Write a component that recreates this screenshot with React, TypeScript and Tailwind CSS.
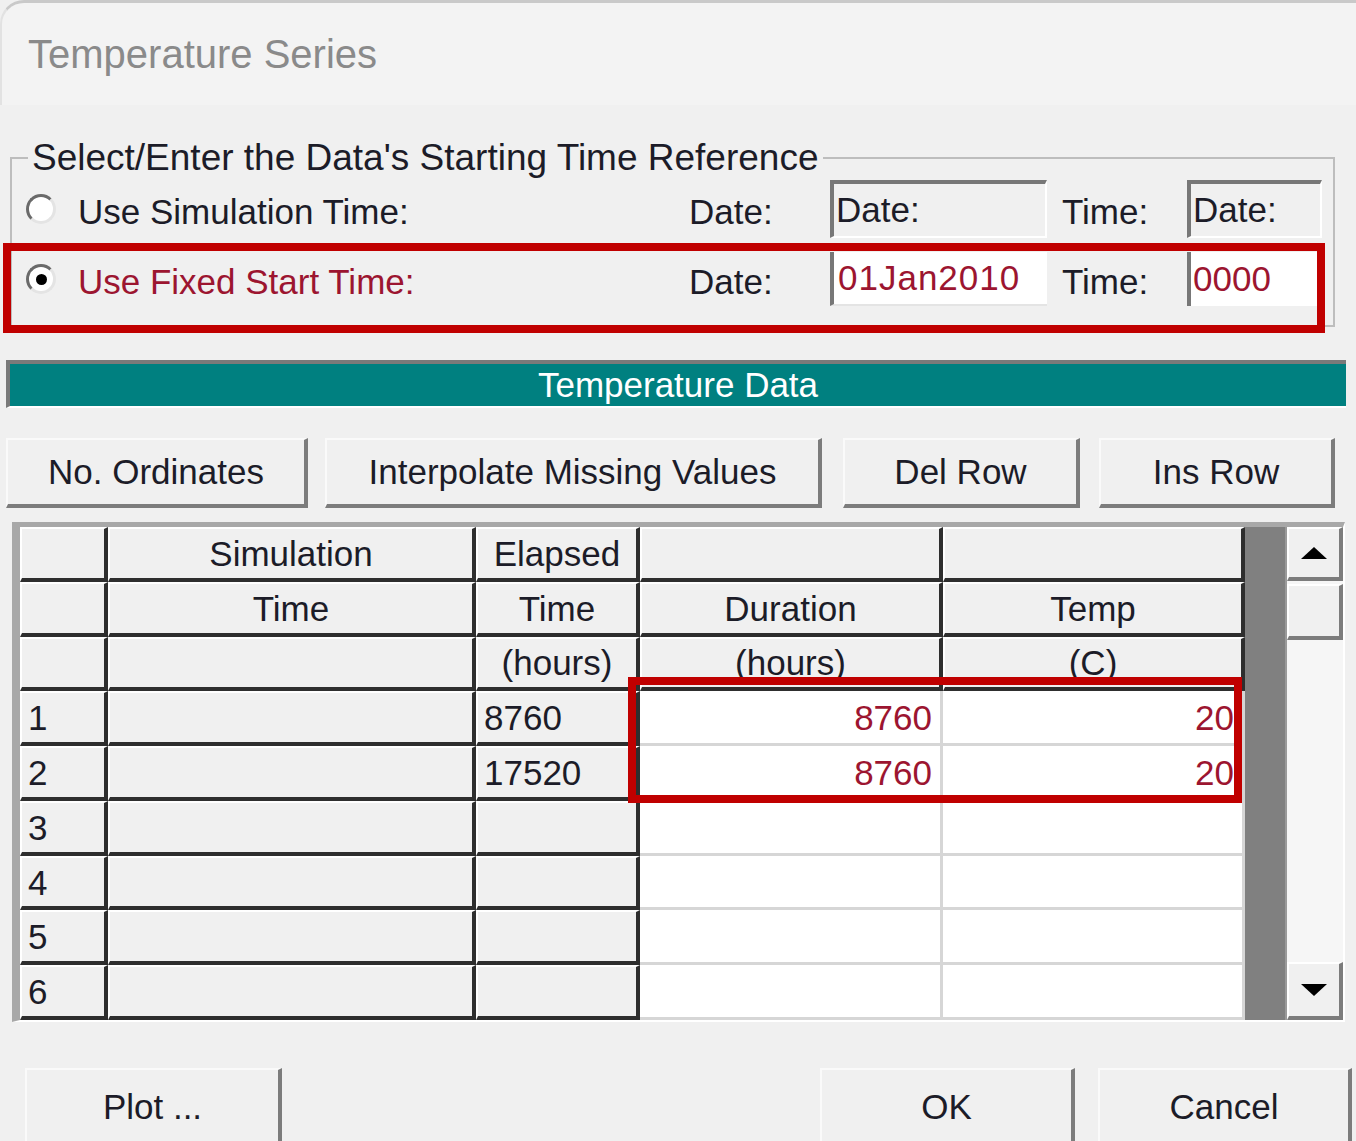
// Temperature Series dialog - classic Win32 look, scaled up
const FONT = { fontFamily: '"Liberation Sans", Arial, sans-serif' };

const COLS = [88, 368, 164, 303, 302];

const header: string[][] = [
  ['', 'Simulation', 'Elapsed', '', ''],
  ['', 'Time', 'Time', 'Duration', 'Temp'],
  ['', '', '(hours)', '(hours)', '(C)'],
];

const data: string[][] = [
  ['1', '', '8760', '8760', '20'],
  ['2', '', '17520', '8760', '20'],
  ['3', '', '', '', ''],
  ['4', '', '', '', ''],
  ['5', '', '', '', ''],
  ['6', '', '', '', ''],
];

function Radio({ checked }: { checked?: boolean }) {
  return (
    <span className="flex h-[30px] w-[30px] items-center justify-center rounded-full border-[3px] border-t-[#6a6a6a] border-l-[#6a6a6a] border-b-[#e4e4e4] border-r-[#e4e4e4] bg-white">
      {checked && <span className="h-[11px] w-[11px] rounded-full bg-black" />}
    </span>
  );
}

function RaisedButton({ label, className }: { label: string; className: string }) {
  return (
    <button
      className={`flex items-center justify-center border-t-2 border-l-2 border-b-[4px] border-r-[4px] border-t-[#fafafa] border-l-[#fafafa] border-b-[#7c7c7c] border-r-[#7c7c7c] bg-[#f0f0f0] text-[35px] text-[#1c1c28] ${className}`}
    >
      {label}
    </button>
  );
}

function GridRow({ cells, isData }: { cells: string[]; isData: boolean }) {
  return (
    <div className="flex h-[55px]">
      {cells.map((c, i) => {
        const white = isData && i >= 3;
        const align =
          !isData ? 'justify-center' : i === 0 || i === 2 ? 'justify-start pl-[6px]' : 'justify-end pr-[8px]';
        const color = white ? 'text-[#9c1530]' : 'text-[#1c1c28]';
        const box = white
          ? 'bg-white border-b-[3px] border-r-[3px] border-[#d6d6d6]'
          : 'bg-[#f0f0f0] border-t-2 border-l-2 border-t-white border-l-white border-b-[4px] border-r-[4px] border-b-[#2e2e2e] border-r-[#2e2e2e]';
        return (
          <div
            key={i}
            style={{ width: COLS[i] }}
            className={`flex shrink-0 items-center overflow-hidden text-[35px] leading-none ${align} ${color} ${box}`}
          >
            {c}
          </div>
        );
      })}
    </div>
  );
}

function ScrollButton({ dir, className }: { dir: 'up' | 'down'; className: string }) {
  return (
    <div
      className={`flex items-center justify-center border-t-2 border-l-2 border-t-white border-l-white border-b-[4px] border-r-[4px] border-b-[#7c7c7c] border-r-[#7c7c7c] bg-[#f0f0f0] ${className}`}
    >
      {dir === 'up' ? (
        <span className="h-0 w-0 border-x-[13px] border-b-[12px] border-x-transparent border-b-black" />
      ) : (
        <span className="h-0 w-0 border-x-[13px] border-t-[12px] border-x-transparent border-t-black" />
      )}
    </div>
  );
}

export default function App() {
  return (
    <div style={FONT} className="relative flex h-[1141px] w-[1356px] flex-col overflow-hidden bg-[#f0f0f0]">
      {/* title bar */}
      <div className="flex h-[105px] shrink-0 items-center rounded-tl-[24px] border-t-[3px] border-l-2 border-t-[#c9c9c9] border-l-[#e2e2e2] bg-[#f3f3f3] pl-[26px] text-[40px] text-[#8a8a8a]">
        Temperature Series
      </div>

      {/* starting time group */}
      <fieldset className="ml-[10px] mt-[33px] h-[189px] w-[1325px] shrink-0 border-2 border-[#bdbdbd] px-0 pb-[13px]">
        <legend className="ml-[16px] px-[4px] text-[37px] leading-[40px] text-[#1c1c28]">
          Select/Enter the Data's Starting Time Reference
        </legend>

        <div className="grid h-[62px] grid-cols-[66px_611px_141px_217px_140px_135px] items-center text-[35px] text-[#1c1c28]">
          <div className="pl-[14px]">
            <Radio />
          </div>
          <div className="pt-[7px]">Use Simulation Time:</div>
          <div className="pt-[7px]">Date:</div>
          <div className="flex h-[58px] items-center border-t-[4px] border-l-[4px] border-t-[#777] border-l-[#777] border-b-2 border-r-2 border-b-white border-r-white bg-[#f0f0f0] pl-[2px]">
            Date:
          </div>
          <div className="pl-[15px] pt-[7px]">Time:</div>
          <div className="flex h-[58px] items-center border-t-[4px] border-l-[4px] border-t-[#777] border-l-[#777] border-b-2 border-r-2 border-b-white border-r-white bg-[#f0f0f0] pl-[2px]">
            Date:
          </div>
        </div>

        <div className="relative mt-[8px] grid h-[62px] grid-cols-[66px_611px_141px_217px_140px_135px] items-center text-[35px] text-[#1c1c28]">
          <div className="pl-[14px]">
            <Radio checked />
          </div>
          <div className="pt-[7px] text-[#9c1530]">Use Fixed Start Time:</div>
          <div className="pt-[7px]">Date:</div>
          <div className="flex h-[54px] items-center border-l-[4px] border-l-[#777] border-b-2 border-b-[#e4e4e4] bg-white pl-[4px] tracking-[1px] text-[#9c1530]">
            01Jan2010
          </div>
          <div className="pl-[15px] pt-[7px]">Time:</div>
          <div className="flex h-[54px] items-center border-l-[4px] border-l-[#777] bg-white pl-[2px] text-[#9c1530]">
            0000
          </div>

          {/* annotation box */}
          <div className="pointer-events-none absolute left-[-9px] top-[-5px] h-[90px] w-[1322px] border-[8px] border-[#c00000]" />
        </div>
      </fieldset>

      {/* teal caption */}
      <div className="ml-[6px] mt-[33px] flex h-[48px] w-[1340px] shrink-0 items-center justify-center border-t-[4px] border-l-[4px] border-t-[#7a7a7a] border-l-[#7a7a7a] border-b-2 border-b-white bg-[#008080] text-[35px] text-white">
        Temperature Data
      </div>

      {/* action buttons */}
      <div className="mt-[30px] flex h-[70px] shrink-0">
        <RaisedButton label="No. Ordinates" className="ml-[6px] w-[302px]" />
        <RaisedButton label="Interpolate Missing Values" className="ml-[17px] w-[497px]" />
        <RaisedButton label="Del Row" className="ml-[21px] w-[237px]" />
        <RaisedButton label="Ins Row" className="ml-[19px] w-[236px]" />
      </div>

      {/* table */}
      <div className="relative ml-[12px] mt-[14px] flex h-[500px] w-[1333px] shrink-0 overflow-hidden border-t-[5px] border-l-[8px] border-t-[#a8a8a8] border-l-[#a8a8a8] border-b-2 border-r-2 border-b-white border-r-white">
        <div className="flex w-[1225px] shrink-0 flex-col">
          {header.map((r, i) => (
            <GridRow key={`h${i}`} cells={r} isData={false} />
          ))}
          {data.map((r, i) => (
            <GridRow key={`d${i}`} cells={r} isData />
          ))}
        </div>
        <div className="w-[40px] shrink-0 bg-[#808080]" />
        <div className="flex w-[58px] shrink-0 flex-col border-l-2 border-[#9a9a9a] bg-[#f6f6f6]">
          <ScrollButton dir="up" className="h-[54px]" />
          <div className="mt-[3px] h-[56px] border-t-2 border-l-2 border-t-white border-l-white border-b-[4px] border-r-[4px] border-b-[#7c7c7c] border-r-[#7c7c7c] bg-[#f0f0f0]" />
          <div className="flex-1" />
          <ScrollButton dir="down" className="h-[58px]" />
        </div>

        {/* annotation box */}
        <div className="pointer-events-none absolute left-[608px] top-[150px] h-[126px] w-[614px] border-[8px] border-[#c00000]" />
      </div>

      {/* bottom buttons */}
      <div className="mt-[46px] flex h-[80px] shrink-0">
        <RaisedButton label="Plot ..." className="ml-[25px] w-[257px]" />
        <RaisedButton label="OK" className="ml-[538px] w-[255px]" />
        <RaisedButton label="Cancel" className="ml-[23px] w-[254px]" />
      </div>
    </div>
  );
}
